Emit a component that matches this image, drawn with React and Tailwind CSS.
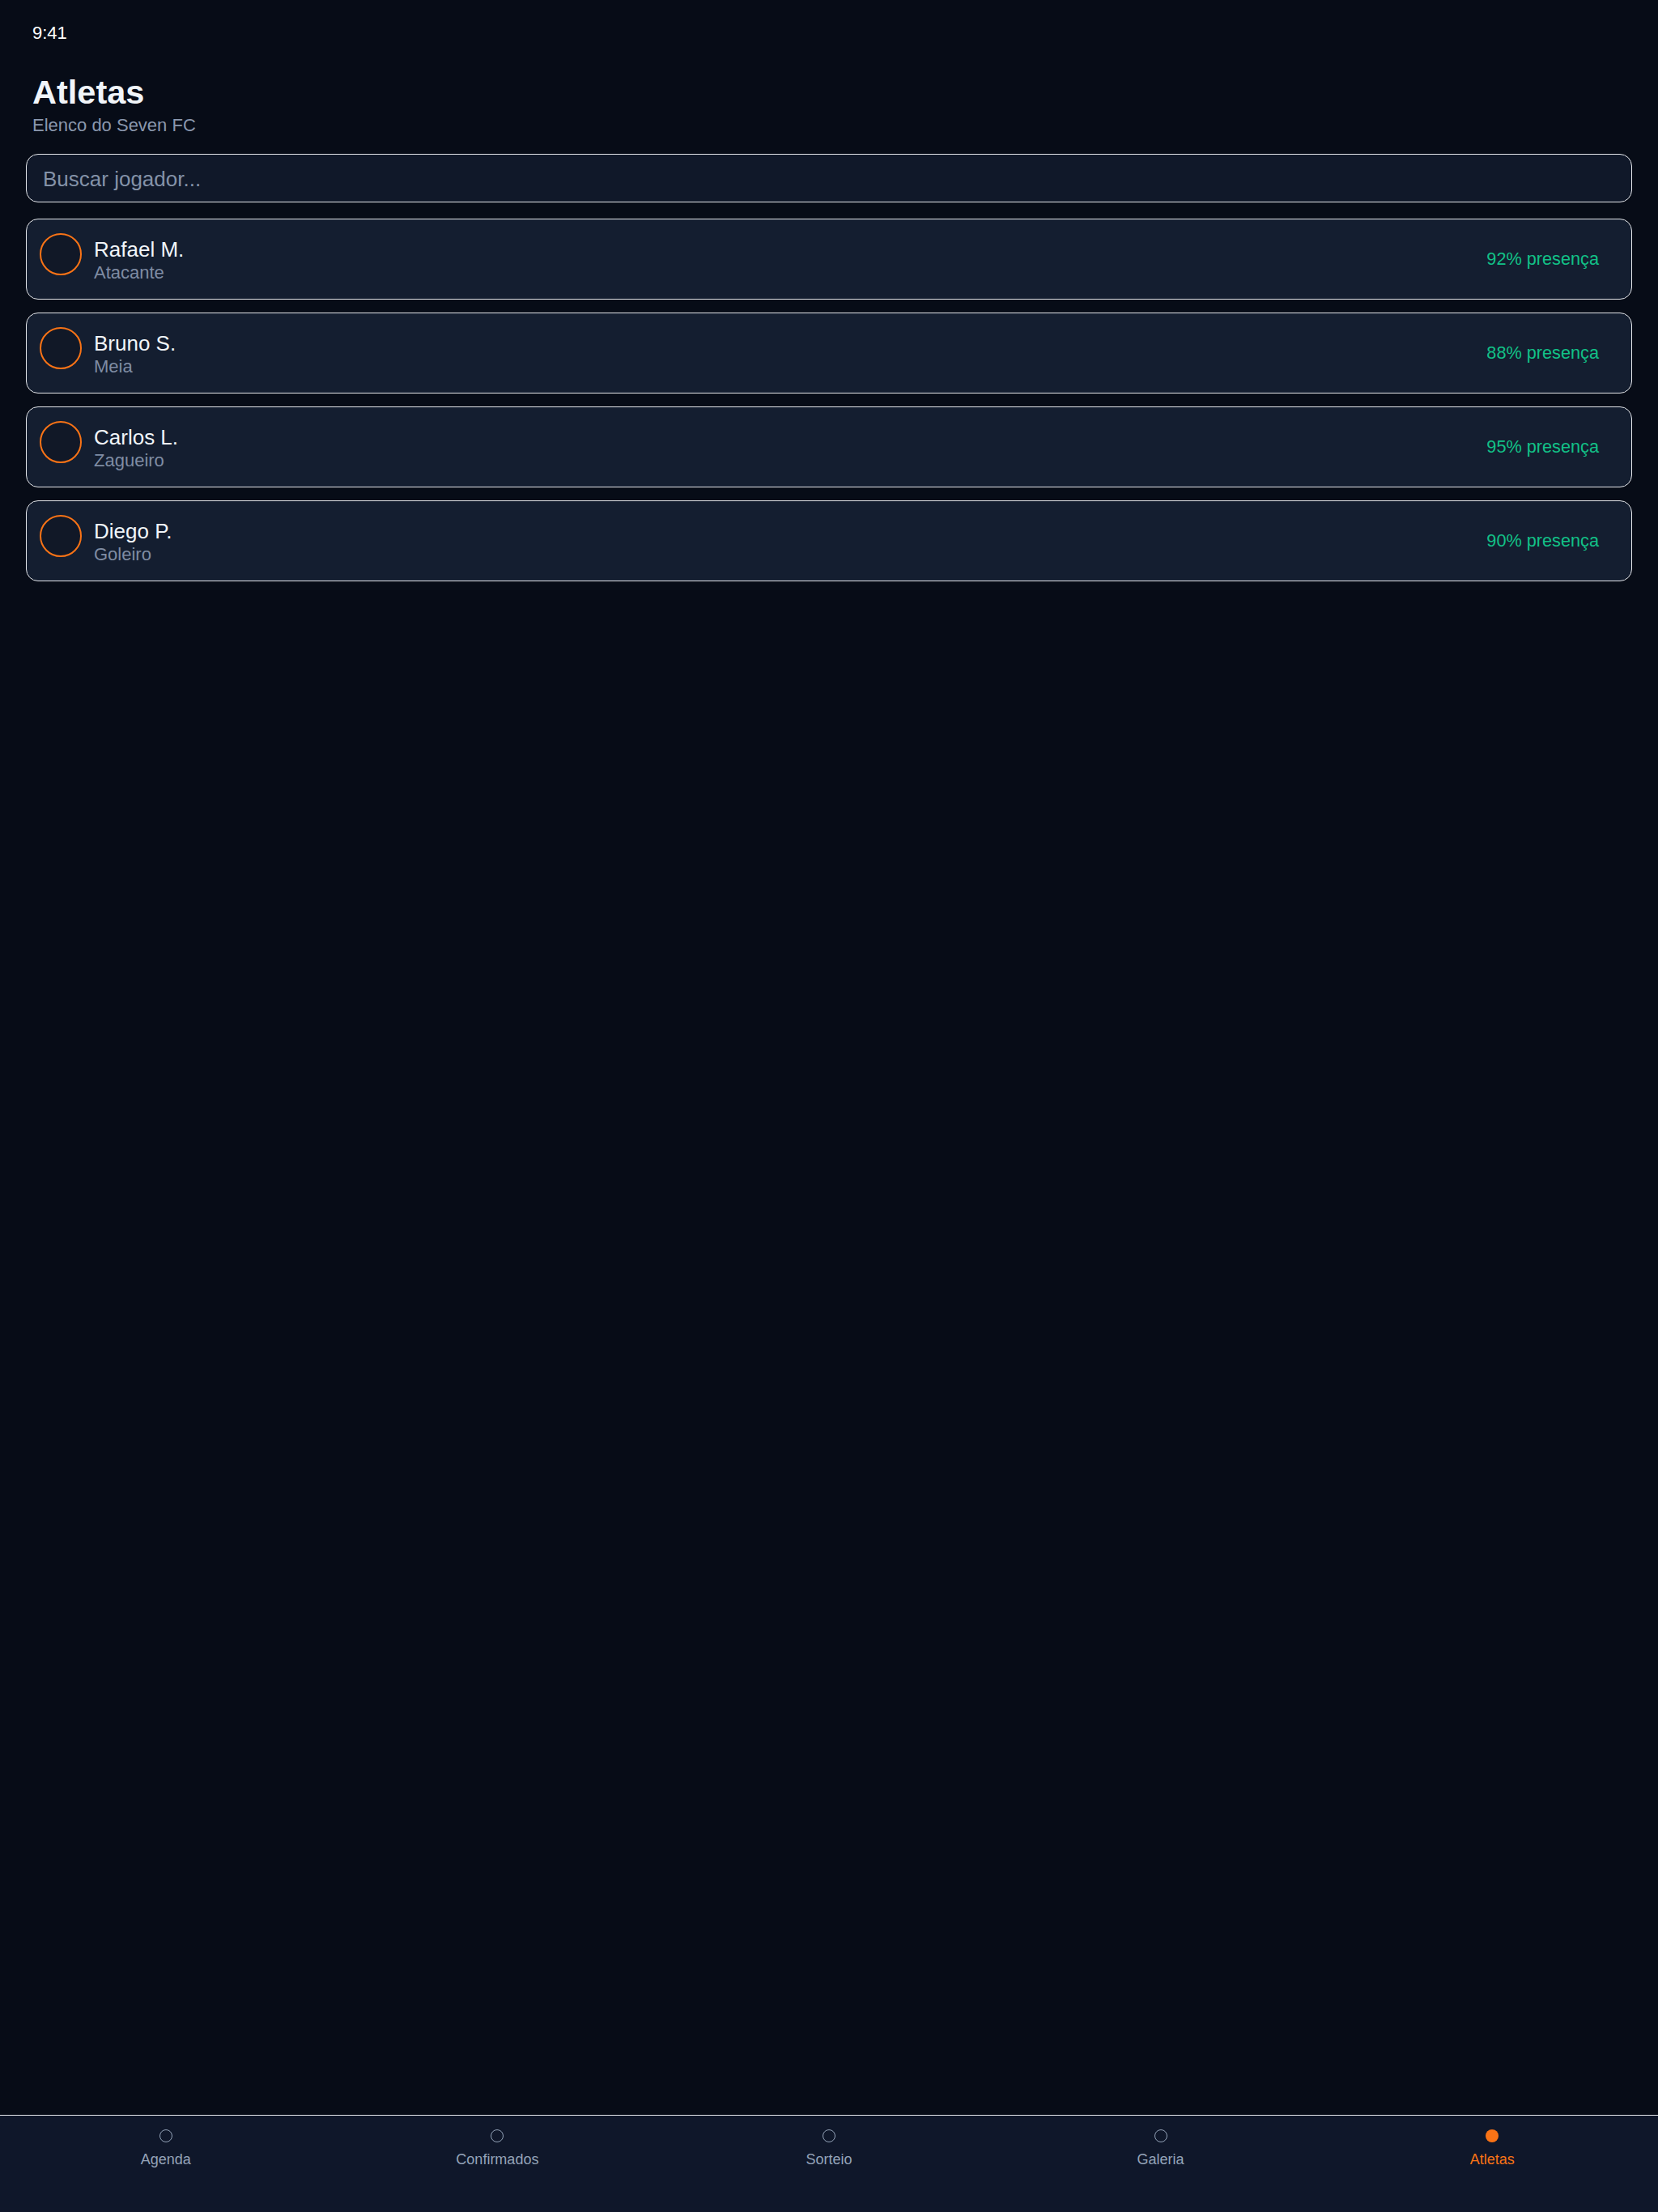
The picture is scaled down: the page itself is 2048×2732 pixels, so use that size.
const players = [
  { name: 'Rafael M.', role: 'Atacante', presence: 92 },
  { name: 'Bruno S.', role: 'Meia', presence: 88 },
  { name: 'Carlos L.', role: 'Zagueiro', presence: 95 },
  { name: 'Diego P.', role: 'Goleiro', presence: 90 },
];

const tabs = ['Agenda', 'Confirmados', 'Sorteio', 'Galeria', 'Atletas'];

function PlayerCard({ player }) {
  return (
    <div className="flex h-[100px] items-center justify-between rounded-[15px] border border-[#e5e7eb] bg-[#141e30] pl-4 pr-10">
      {/* Avatar + name block sit at the top of the card */}
      <div className="flex items-start gap-[15px] self-start pt-[17px]">
        <div className="h-[52px] w-[52px] rounded-full border-2 border-[#f97316] bg-[#111827]" />
        <div className="mt-[5px] flex flex-col">
          <span className="text-[26px] leading-[30px] text-[#f1f5f9]">{player.name}</span>
          <span className="text-[22px] leading-[27px] text-[#7f8ca3]">{player.role}</span>
        </div>
      </div>
      <span className="text-[21.7px] leading-[30px] text-[#12c187]">{player.presence}% presença</span>
    </div>
  );
}

function BottomNav({ active }) {
  return (
    <nav className="grid h-[120px] grid-cols-5 border-t border-[#e5e7eb] bg-[#0f172a]">
      {tabs.map(tab => {
        const on = tab === active;
        return (
          <div key={tab} className="flex flex-col items-center gap-2 pt-[17px]">
            {on ? (
              <div className="h-4 w-4 rounded-full bg-[#f97316]" />
            ) : (
              <div className="h-4 w-4 rounded-full border-[1.5px] border-[#94a3b8]" />
            )}
            <span className={`text-[18px] leading-[27px] ${on ? 'text-[#f97316]' : 'text-[#94a3b8]'}`}>
              {tab}
            </span>
          </div>
        );
      })}
    </nav>
  );
}

export default function App() {
  return (
    <div
      className="flex h-screen flex-col bg-[#070c17]"
      style={{ fontFamily: '"Liberation Sans", Arial, sans-serif' }}
    >
      <div className="flex-1">
        {/* Status bar */}
        <div className="px-10 pt-6 text-[22px] leading-[33px] text-white">9:41</div>

        {/* Header */}
        <div className="mt-[33px] px-10">
          <h1 className="text-[41.5px] font-bold leading-[48px] text-[#f1f5f9]">Atletas</h1>
          <p className="text-[22px] leading-[33px] text-[#8a97ad]">Elenco do Seven FC</p>
        </div>

        <div className="mt-[19px] px-8">
          <input
            type="text"
            placeholder="Buscar jogador..."
            className="h-[60px] w-full rounded-[15px] border border-[#e5e7eb] bg-[#101829] px-5 pt-[2px] text-[26px] text-white outline-none placeholder:text-[#8492a8]"
          />

          <div className="mt-5 flex flex-col gap-4">
            {players.map(p => (
              <PlayerCard key={p.name} player={p} />
            ))}
          </div>
        </div>
      </div>

      <BottomNav active="Atletas" />
    </div>
  );
}
